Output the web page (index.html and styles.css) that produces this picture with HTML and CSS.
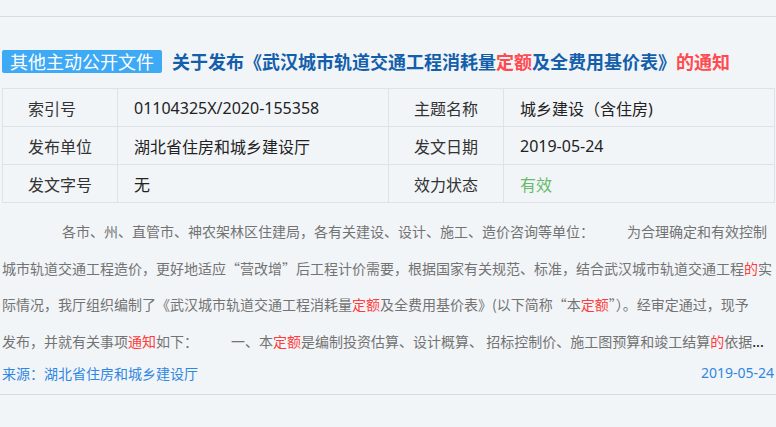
FILE: index.html
```html
<!DOCTYPE html>
<html lang="zh-CN">
<head>
<meta charset="utf-8">
<title>关于发布《武汉城市轨道交通工程消耗量定额及全费用基价表》的通知</title>
<link rel="stylesheet" href="styles.css">
</head>
<body>
<div class="item">
  <div class="head">
    <span class="badge">其他主动公开文件</span>
    <h1 class="title">关于发布《武汉城市轨道交通工程消耗量<em>定额</em>及全费用基价表》<em>的通知</em></h1>
  </div>
  <table class="meta">
    <colgroup><col class="c-label"><col class="c-value"><col class="c-label"><col class="c-value"></colgroup>
    <tr>
      <th>索引号</th><td>01104325X/2020-155358</td>
      <th>主题名称</th><td>城乡建设（含住房)</td>
    </tr>
    <tr>
      <th>发布单位</th><td>湖北省住房和城乡建设厅</td>
      <th>发文日期</th><td>2019-05-24</td>
    </tr>
    <tr>
      <th>发文字号</th><td>无</td>
      <th>效力状态</th><td class="valid">有效</td>
    </tr>
  </table>
  <p class="summary">各市、州、直管市、神农架林区住建局，各有关建设、设计、施工、造价咨询等单位：<span class="gap"></span>为合理确定和有效控制城市轨道交通工程造价，更好地适应“营改增”后工程计价需要，根据国家有关规范、标准，结合武汉城市轨道交通工程<em>的</em>实际情况，我厅组织编制了《武汉城市轨道交通工程消耗量<em>定额</em>及全费用基价表》(以下简称“本<em>定额</em>”）。经审定通过，现予<br>发布，并就有关事项<em>通知</em>如下：<span class="gap"></span>一、本<em>定额</em>是编制投资估算、设计概算、 招标控制价、施工图预算和竣工结算<em>的</em>依据<span class="more">...</span></p>
  <div class="foot">
    <span class="source">来源：湖北省住房和城乡建设厅</span>
    <span class="date">2019-05-24</span>
  </div>
</div>
</body>
</html>
```

FILE: styles.css
```css
html, body {
  margin: 0;
  padding: 0;
}
body {
  background: #f2f5f8;
  font-family: "Noto Sans CJK SC", "Noto Sans", sans-serif;
  color: #333;
}
.item {
  margin-top: 16px;
  border-top: 1px solid #d8dbdf;
  border-bottom: 1px solid #d8dbdf;
  padding: 33px 2px 11px;
}
.head {
  display: flex;
  align-items: center;
  height: 23px;
}
.badge {
  background: #3ea9f5;
  color: #fff;
  font-size: 18px;
  line-height: 23px;
  height: 23px;
  padding: 0 8px;
  border-radius: 2px;
  white-space: nowrap;
}
.title {
  margin: 0 0 0 10px;
  font-size: 18px;
  line-height: 23px;
  font-weight: bold;
  color: #145fab;
  white-space: nowrap;
}
.title em {
  font-style: normal;
  color: #ff4b4f;
}
.meta {
  margin-top: 15px;
  width: 772px;
  border-collapse: collapse;
  table-layout: fixed;
  font-size: 16px;
  font-family: "Noto Sans", "Noto Sans CJK SC", sans-serif;
}
.c-label { width: 115px; }
.c-value { width: 271px; }
.meta th, .meta td {
  border: 1px solid #dce2e8;
  height: 37px;
  padding: 0 0 0 16px;
  text-align: left;
  font-weight: normal;
  white-space: nowrap;
}
.meta th {
  padding-left: 25px;
  color: #333;
}
.meta td {
  color: #222;
}
.meta td.valid {
  color: #66bb6a;
}
.summary {
  margin: 10px 0 0;
  font-size: 14px;
  line-height: 36.5px;
  color: #737373;
  text-indent: 60px;
  height: 146px;
  overflow: hidden;
}
.summary em {
  font-style: normal;
  color: #ff3b3b;
}
.summary .gap {
  display: inline-block;
  width: 33px;
}
.summary .more {
  color: #111;
}
.foot {
  display: flex;
  justify-content: space-between;
  align-items: center;
  margin-top: 4px;
  font-size: 14px;
  line-height: 20px;
  color: #2f87e2;
}
.foot .date {
  font-family: "Noto Sans", "Noto Sans CJK SC", sans-serif;
}
```
